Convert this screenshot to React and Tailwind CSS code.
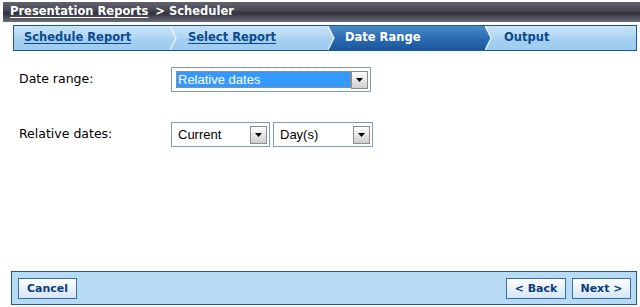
import React from 'react';

const steps = [
  { label: 'Schedule Report', width: 'w-[156px]', pad: 'pl-[10px]', state: 'link' },
  { label: 'Select Report', width: 'w-[158px]', pad: 'pl-[18px]', state: 'link' },
  { label: 'Date Range', width: 'w-[157px]', pad: 'pl-[17px]', state: 'active' },
  { label: 'Output', width: 'flex-1', pad: 'pl-[19px]', state: 'plain' },
];

const Chevron = () => (
  <svg
    className="absolute top-0 left-full z-10 h-[24px] w-[8px]"
    viewBox="0 0 8 24"
    preserveAspectRatio="none"
  >
    <polyline points="0,0 6,12 0,24" fill="none" stroke="#ffffff" strokeOpacity="0.9" strokeWidth="1.2" />
  </svg>
);

const DropButton = () => (
  <div className="w-[17px] h-[18px] shrink-0 border border-[#8c8c8c] bg-gradient-to-b from-[#ffffff] to-[#cfcfcf] flex items-center justify-center">
    <svg width="7" height="4" viewBox="0 0 7 4">
      <polygon points="0,0 7,0 3.5,4" fill="#000000" />
    </svg>
  </div>
);

const Select = ({ width, text, focused }) => (
  <div className={`${width} h-[25px] border border-[#7f9db9] bg-white flex items-center pr-[2px] ${focused ? 'pl-[4px]' : 'pl-[6px]'}`}>
    {focused ? (
      <div className="flex-1 h-[17px] bg-[#3399ff] border border-dotted border-[#d98a3a] text-white flex items-center pl-[1px] leading-none">
        {text}
      </div>
    ) : (
      <div className="flex-1 text-black leading-none">{text}</div>
    )}
    <DropButton />
  </div>
);

const FooterButton = ({ children, width }) => (
  <button className={`${width} h-[21px] border border-[#3a6ea5] bg-gradient-to-b from-[#ffffff] to-[#d3e6f8] text-[#0e3d78] font-bold text-[11px] leading-none flex items-center justify-center`}>
    {children}
  </button>
);

const App = () => {
  return (
    <div className="w-[640px] h-[307px] bg-white flex flex-col overflow-hidden font-['DejaVu_Sans',Verdana,sans-serif]">
      {/* breadcrumb bar */}
      <div className="mt-[2px] ml-[3px] h-[20px] flex items-center pl-[7px] text-white font-bold text-[11.5px] bg-[linear-gradient(to_bottom,#62636e_0%,#44454f_45%,#30313c_55%,#6b6c77_100%)]">
        <span className="underline underline-offset-2">Presentation Reports</span>
        <span className="ml-[7px]">&gt; Scheduler</span>
      </div>

      {/* wizard steps */}
      <div className="mt-[3px] ml-[13px] w-[624px] h-[26px] border border-[#15589e] flex bg-[linear-gradient(to_bottom,#c6e3f8_0%,#b3d8f3_45%,#a5cff0_55%,#9ecbee_100%)]">
        {steps.map((step, i) => (
          <div
            key={step.label}
            className={`relative h-[24px] ${step.width} ${step.pad} flex items-center text-[11.5px] font-bold ${
              step.state === 'active'
                ? 'text-white bg-[linear-gradient(to_bottom,#4a88c8_0%,#2c6cb2_50%,#1c569c_100%)] [clip-path:polygon(0_0,100%_0,100%_100%,0_100%,6px_50%)]'
                : 'text-[#0b4a8e]'
            }`}
          >
            <span className={step.state === 'link' ? 'underline underline-offset-2' : ''}>{step.label}</span>
            {i < steps.length - 1 && step.state !== 'active' && <Chevron />}
          </div>
        ))}
      </div>
      <div className="relative h-0">
        {/* arrow of the active step, laid over the Output step */}
        <svg className="absolute left-[485px] -top-[25px] h-[24px] w-[8px]" viewBox="0 0 8 24" preserveAspectRatio="none">
          <defs>
            <linearGradient id="activeArrow" x1="0" y1="0" x2="0" y2="1">
              <stop offset="0" stopColor="#4a88c8" />
              <stop offset="0.5" stopColor="#2c6cb2" />
              <stop offset="1" stopColor="#1c569c" />
            </linearGradient>
          </defs>
          <polygon points="0,0 6,12 0,24" fill="url(#activeArrow)" />
          <polyline points="0,0 6,12 0,24" fill="none" stroke="#ffffff" strokeOpacity="0.9" strokeWidth="1.2" />
        </svg>
      </div>

      {/* form */}
      <div className="flex-1 pl-[19px] pt-[16px] text-[12.5px] text-black">
        <div className="flex items-center h-[25px]">
          <div className="w-[152px]">Date range:</div>
          <div className="font-['Liberation_Sans',Arial,sans-serif] text-[13px]">
            <Select width="w-[200px]" text="Relative dates" focused />
          </div>
        </div>
        <div className="flex items-center h-[25px] mt-[30px]">
          <div className="w-[152px]">Relative dates:</div>
          <div className="flex gap-[3px] font-['Liberation_Sans',Arial,sans-serif] text-[13px]">
            <Select width="w-[99px]" text="Current" />
            <Select width="w-[100px]" text="Day(s)" />
          </div>
        </div>
      </div>

      {/* footer */}
      <div className="ml-[11px] mb-[2px] w-[626px] h-[34px] border border-[#1b5a9e] bg-[#b7dbf2] flex items-center justify-between pl-[6px] pr-[5px]">
        <FooterButton width="w-[59px]">Cancel</FooterButton>
        <div className="flex gap-[6px]">
          <FooterButton width="w-[60px]">&lt; Back</FooterButton>
          <FooterButton width="w-[59px]">Next &gt;</FooterButton>
        </div>
      </div>
    </div>
  );
};

export default App;
